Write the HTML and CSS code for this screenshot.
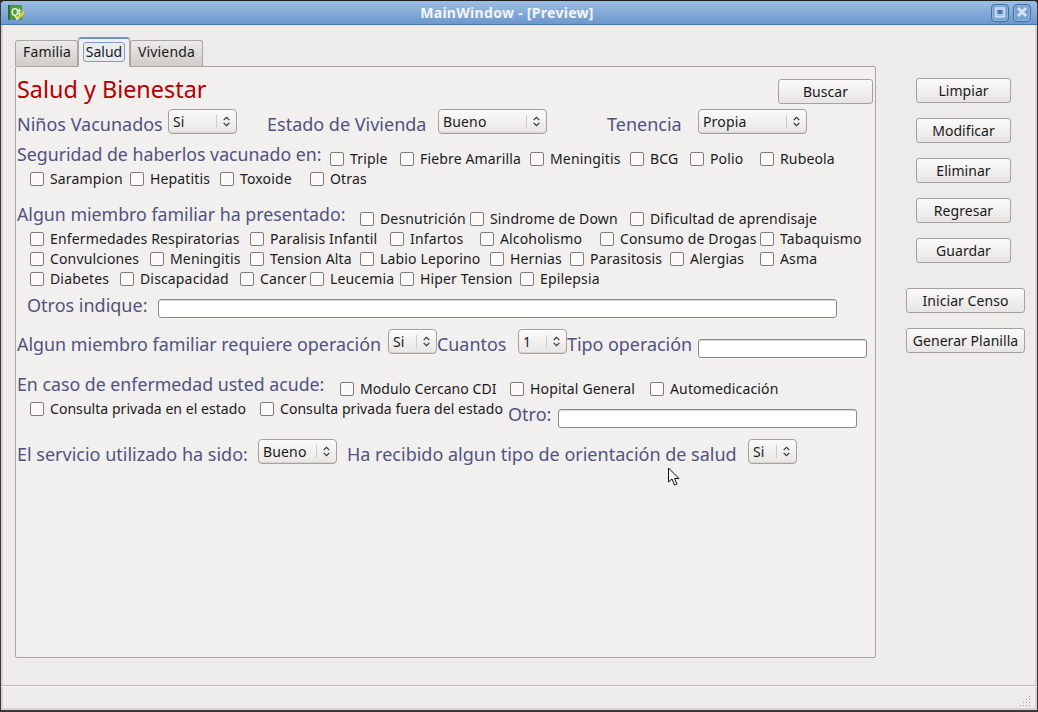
FILE: index.html
```html
<!DOCTYPE html>
<html lang="es">
<head>
<meta charset="utf-8">
<title>MainWindow - [Preview]</title>
<link rel="stylesheet" href="styles.css">
</head>
<body>
<svg class="defs" width="0" height="0"><defs>
<symbol id="chev" viewBox="0 0 20 13"><path d="M7 5 10 2 13 5M7 8 10 11 13 8" fill="none" stroke="#333" stroke-width="1.2"/></symbol>
</defs></svg>
<div class="window">
  <header class="titlebar">
    <div class="appicon"><span class="qt">Qt</span><svg class="pencil" width="10" height="10" viewBox="0 0 10 10"><path d="M0 9 1 6 7 0 9 2 3 8Z" fill="#ecc94a"/><path d="M0 9 1 6 3 8Z" fill="#f6f1d8"/></svg></div>
    <div class="wintitle">MainWindow - [Preview]</div>
    <div class="wbtn"><svg width="16" height="16" viewBox="0 0 16 16"><rect x="3.5" y="3" width="9" height="9" fill="#a9c6e8" stroke="#d3e1f1" stroke-width="1.4"/><rect x="5.5" y="5" width="5" height="4" fill="#4d7db6"/></svg></div>
    <div class="wbtn"><svg width="16" height="16" viewBox="0 0 16 16"><path d="M4 3 12 11M12 3 4 11" stroke="#dbe6f3" stroke-width="2.8"/></svg></div>
  </header>
  <div class="client">
    <main class="left">
      <nav class="tabs">
        <div class="tab t-familia">Familia</div>
        <div class="tab active t-salud"><span class="focus">Salud</span></div>
        <div class="tab t-vivienda">Vivienda</div>
      </nav>
      <section class="panel">
        <div class="row r-title"><h1 class="w761">Salud y Bienestar</h1><button class="btn buscar">Buscar</button></div>
        <div class="row r-combo mt5">
          <label class="lbl w151">Niños Vacunados</label><div class="combo c69"><span>Si</span><svg class="chev"><use href="#chev"/></svg></div>
          <label class="lbl lbl-gap30 w171">Estado de Vivienda</label><div class="combo c109"><span>Bueno</span><svg class="chev"><use href="#chev"/></svg></div>
          <label class="lbl lbl-gap60 w91">Tenencia</label><div class="combo c109"><span>Propia</span><svg class="chev"><use href="#chev"/></svg></div>
        </div>
        <div class="row mt15">
          <label class="lbl up w313">Seguridad de haberlos vacunado en:</label>
          <span class="cb w70">Triple</span><span class="cb w130">Fiebre Amarilla</span><span class="cb w100">Meningitis</span><span class="cb w60">BCG</span><span class="cb w70">Polio</span><span class="cb">Rubeola</span>
        </div>
        <div class="row ind">
          <span class="cb w100">Sarampion</span><span class="cb w90">Hepatitis</span><span class="cb w90">Toxoide</span><span class="cb">Otras</span>
        </div>
        <div class="row mt20">
          <label class="lbl up w343">Algun miembro familiar ha presentado:</label>
          <span class="cb w110">Desnutrición</span><span class="cb w160">Sindrome de Down</span><span class="cb">Dificultad de aprendisaje</span>
        </div>
        <div class="row ind">
          <span class="cb w220">Enfermedades Respiratorias</span><span class="cb w140">Paralisis Infantil</span><span class="cb w90">Infartos</span><span class="cb w120">Alcoholismo</span><span class="cb w160">Consumo de Drogas</span><span class="cb">Tabaquismo</span>
        </div>
        <div class="row ind">
          <span class="cb w120">Convulciones</span><span class="cb w100">Meningitis</span><span class="cb w110">Tension Alta</span><span class="cb w130">Labio Leporino</span><span class="cb w80">Hernias</span><span class="cb w100">Parasitosis</span><span class="cb w90">Alergias</span><span class="cb">Asma</span>
        </div>
        <div class="row ind">
          <span class="cb w90">Diabetes</span><span class="cb w120">Discapacidad</span><span class="cb w70">Cancer</span><span class="cb w90">Leucemia</span><span class="cb w120">Hiper Tension</span><span class="cb">Epilepsia</span>
        </div>
        <div class="row mt10 ind-otros">
          <label class="lbl up2 w131">Otros indique:</label><div class="field f679"></div>
        </div>
        <div class="row r-op mt10">
          <label class="lbl up3 w371">Algun miembro familiar requiere operación</label><div class="combo c49"><span>Si</span><svg class="chev"><use href="#chev"/></svg></div>
          <label class="lbl up3 w81">Cuantos</label><div class="combo c49"><span>1</span><svg class="chev"><use href="#chev"/></svg></div>
          <label class="lbl up3 w131">Tipo operación</label><div class="field f169 down"></div>
        </div>
        <div class="row mt20">
          <label class="lbl up w323">En caso de enfermedad usted acude:</label>
          <span class="cb tight w170">Modulo Cercano CDI</span><span class="cb w140">Hopital General</span><span class="cb">Automedicación</span>
        </div>
        <div class="row r-cons ind">
          <span class="cb tight w230">Consulta privada en el estado</span><span class="cb tight w248">Consulta privada fuera del estado</span>
          <label class="lbl otro w50">Otro:</label><div class="field f299 down"></div>
        </div>
        <div class="row r-combo mt10">
          <label class="lbl w241">El servicio utilizado ha sido:</label><div class="combo c79"><span>Bueno</span><svg class="chev"><use href="#chev"/></svg></div>
          <label class="lbl lbl-gap10 w401">Ha recibido algun tipo de orientación de salud</label><div class="combo c49"><span>Si</span><svg class="chev"><use href="#chev"/></svg></div>
        </div>
      </section>
    </main>
    <aside class="actions">
      <button class="btn act">Limpiar</button>
      <button class="btn act">Modificar</button>
      <button class="btn act">Eliminar</button>
      <button class="btn act">Regresar</button>
      <button class="btn act">Guardar</button>
      <button class="btn act wide">Iniciar Censo</button>
      <button class="btn act wide">Generar Planilla</button>
    </aside>
  </div>
  <footer class="status"><svg width="12" height="12" viewBox="0 0 12 12"><path d="M9 1h1v1H9zM6 4h1v1H6zM9 4h1v1H9zM3 7h1v1H3zM6 7h1v1H6zM9 7h1v1H9zM0 10h1v1H0zM3 10h1v1H3zM6 10h1v1H6zM9 10h1v1H9z" fill="#a9a6a2"/></svg></footer>
  <svg class="cursor" width="14" height="20" viewBox="0 0 14 20"><path d="M1.5 1 1.5 15 5 12 7.5 18 10 17 7.5 11.5 12 11.5Z" fill="#f4f4f4" stroke="#111" stroke-width="1"/></svg>
</div>
</body>
</html>
```
FILE: styles.css
```css
* { box-sizing: border-box; }
html, body { margin: 0; padding: 0; }
body { width: 1038px; height: 712px; overflow: hidden; background: #2e2c2a; font-family: "Noto Sans", sans-serif; font-size: 14px; letter-spacing: 0.15px; color: #1a1a1a; }
.defs { position: absolute; }
.window { position: relative; width: 1038px; height: 712px; display: flex; flex-direction: column; background: #edecea; border: 1px solid #3a3836; border-top-color: #1f1f1f; border-bottom-width: 2px; border-radius: 5px 5px 0 0; }

.titlebar { height: 24px; flex: none; display: flex; align-items: center; padding: 0 6px 0 7px; background: linear-gradient(#9dbde3, #6c98cc); border-bottom: 1px solid #4a76ab; border-radius: 4px 4px 0 0; color: #fff; }
.appicon { position: relative; width: 14px; height: 15px; background: #4f9a3c; border-left: 2px solid #2b6b22; }
.qt { display: block; font: bold 10px/15px "Liberation Sans", sans-serif; color: #e8f4df; letter-spacing: -1px; padding-left: 1px; }
.pencil { position: absolute; right: -4px; bottom: -1px; }
.wintitle { flex: 1; text-align: center; font: bold 14px/22px "Noto Sans", sans-serif; color: #f2f5f9; letter-spacing: 0.3px; padding-left: 5px; }
.wbtn { width: 18px; height: 18px; border: 1px solid #44709f; border-radius: 4px; background: #79a2d3; box-shadow: inset 0 0 0 1px #8fb3dd; display: flex; align-items: center; justify-content: center; margin-left: 4px; }

.client { flex: 1; display: flex; min-height: 0; box-shadow: inset 2px 0 0 #d6d3cf, inset -2px 0 0 #d6d3cf; }
.left { width: 875px; padding: 12px 0 0 14px; flex: none; }
.tabs { display: flex; height: 29px; position: relative; z-index: 1; align-items: flex-end; }
.tab { height: 26px; padding: 0 7px; line-height: 22px; background: linear-gradient(#ecebe9, #cfccc8); border: 1px solid #a9a6a1; border-bottom: 0; border-radius: 3px 3px 0 0; }
.t-familia { width: 63px; }
.t-vivienda { width: 73px; }
.tab.active { height: 30px; width: 52px; padding: 4px 4px 0; background: #f2f0ef; border-top: 2px solid #6d93c0; border-bottom: 1px solid #f2f0ef; margin-bottom: -1px; line-height: 17px; }
.focus { display: block; height: 20px; border: 1px solid #7d9dc4; border-radius: 3px; background: #e9ecf2; text-align: center; line-height: 17px; margin-top: -1px; letter-spacing: 0; }
.panel { width: 861px; height: 592px; border: 1px solid #a9a6a1; border-radius: 2px; background: #f2f0ef; padding: 2px 0 0 1px; }

.row { display: flex; align-items: flex-start; height: 20px; white-space: nowrap; }
.r-title { height: 35px; align-items: flex-end; }
.r-combo { height: 25px; }
.r-op { height: 30px; }
.r-cons { height: 30px; }
.ind { padding-left: 13px; }
.ind-otros { padding-left: 10px; }
.mt5 { margin-top: 5px; }
.mt10 { margin-top: 10px; }
.mt15 { margin-top: 15px; }
.mt20 { margin-top: 20px; }

h1 { margin: 4px 0 0; font-weight: 400; font-size: 23.4px; line-height: 32px; color: #b30000; align-self: flex-start; letter-spacing: 0; }
.lbl { display: block; flex: none; font-size: 18px; letter-spacing: 0; line-height: 30px; color: #50537f; }
.lbl.up { font-size: 17.75px; line-height: 20px; margin-top: -5px; margin-bottom: 5px; }
.lbl.up2 { line-height: 20px; margin-top: -4px; }
.lbl.up3 { font-size: 17.9px; line-height: 30px; }
.lbl.otro { line-height: 20px; margin-top: 5px; }
.lbl-gap30 { margin-left: 30px; }
.lbl-gap60 { margin-left: 60px; }
.lbl-gap10 { margin-left: 10px; }

.cb { display: flex; flex: none; align-items: center; height: 20px; line-height: 20px; }
.cb.tight { letter-spacing: 0.05px; }
.cb::before { content: ""; flex: none; width: 12px; height: 12px; margin-right: 6px; background: #fbfaf9; border: 1px solid #7e7b77; border-radius: 2px; }

.combo { flex: none; display: flex; align-items: center; height: 25px; padding-left: 4px; border: 1px solid #a5a29d; border-radius: 4px; background: linear-gradient(#fbfafa, #e9e7e5); box-shadow: inset 0 -1px 0 #d8d5d1; }
.combo span { flex: 1; line-height: 20px; margin-top: 1px; }
.chev { width: 20px; height: 13px; flex: none; border-left: 1px solid #cfccc8; }
.c49 { width: 49px; }
.c69 { width: 69px; }
.c79 { width: 79px; }
.c109 { width: 109px; }

.field { flex: none; height: 19px; background: #fff; border: 1px solid #8b8884; border-radius: 3px; box-shadow: inset 0 1px 0 #dcdad7; }
.f169 { width: 169px; }
.f299 { width: 299px; }
.f679 { width: 679px; }
.down { margin-top: 10px; }

.w50 { width: 50px; } .w60 { width: 60px; } .w70 { width: 70px; } .w80 { width: 80px; } .w81 { width: 81px; } .w90 { width: 90px; }
.w91 { width: 91px; } .w100 { width: 100px; } .w110 { width: 110px; } .w120 { width: 120px; } .w130 { width: 130px; }
.w131 { width: 131px; } .w140 { width: 140px; } .w151 { width: 151px; } .w160 { width: 160px; } .w170 { width: 170px; }
.w171 { width: 171px; } .w220 { width: 220px; } .w230 { width: 230px; } .w241 { width: 241px; } .w248 { width: 248px; }
.w313 { width: 313px; } .w323 { width: 323px; } .w343 { width: 343px; } .w371 { width: 371px; } .w401 { width: 401px; }
.w761 { width: 761px; }

.btn { flex: none; padding: 0; font-family: inherit; font-size: 14px; letter-spacing: 0.05px; color: #1a1a1a; height: 25px; border: 1px solid #a5a29d; border-radius: 3px; background: linear-gradient(#fbfafa, #e7e5e3); }
.buscar { width: 95px; }
.actions { flex: 1; display: flex; flex-direction: column; align-items: flex-start; padding: 53px 0 0 40px; }
.act { width: 95px; margin-bottom: 15px; }
.wide { width: 119px; margin-left: -10px; }
.act:nth-child(5) { margin-bottom: 25px; }

.status { flex: none; height: 25px; border-top: 1px solid #bdbab6; box-shadow: inset 0 1px 0 #fbfaf9, inset 2px 0 0 #d6d3cf, inset -2px 0 0 #d6d3cf, inset 0 -2px 0 #d6d3cf; display: flex; justify-content: flex-end; align-items: flex-end; padding: 0 5px 3px 0; }
.cursor { position: absolute; left: 666px; top: 466px; }
```
